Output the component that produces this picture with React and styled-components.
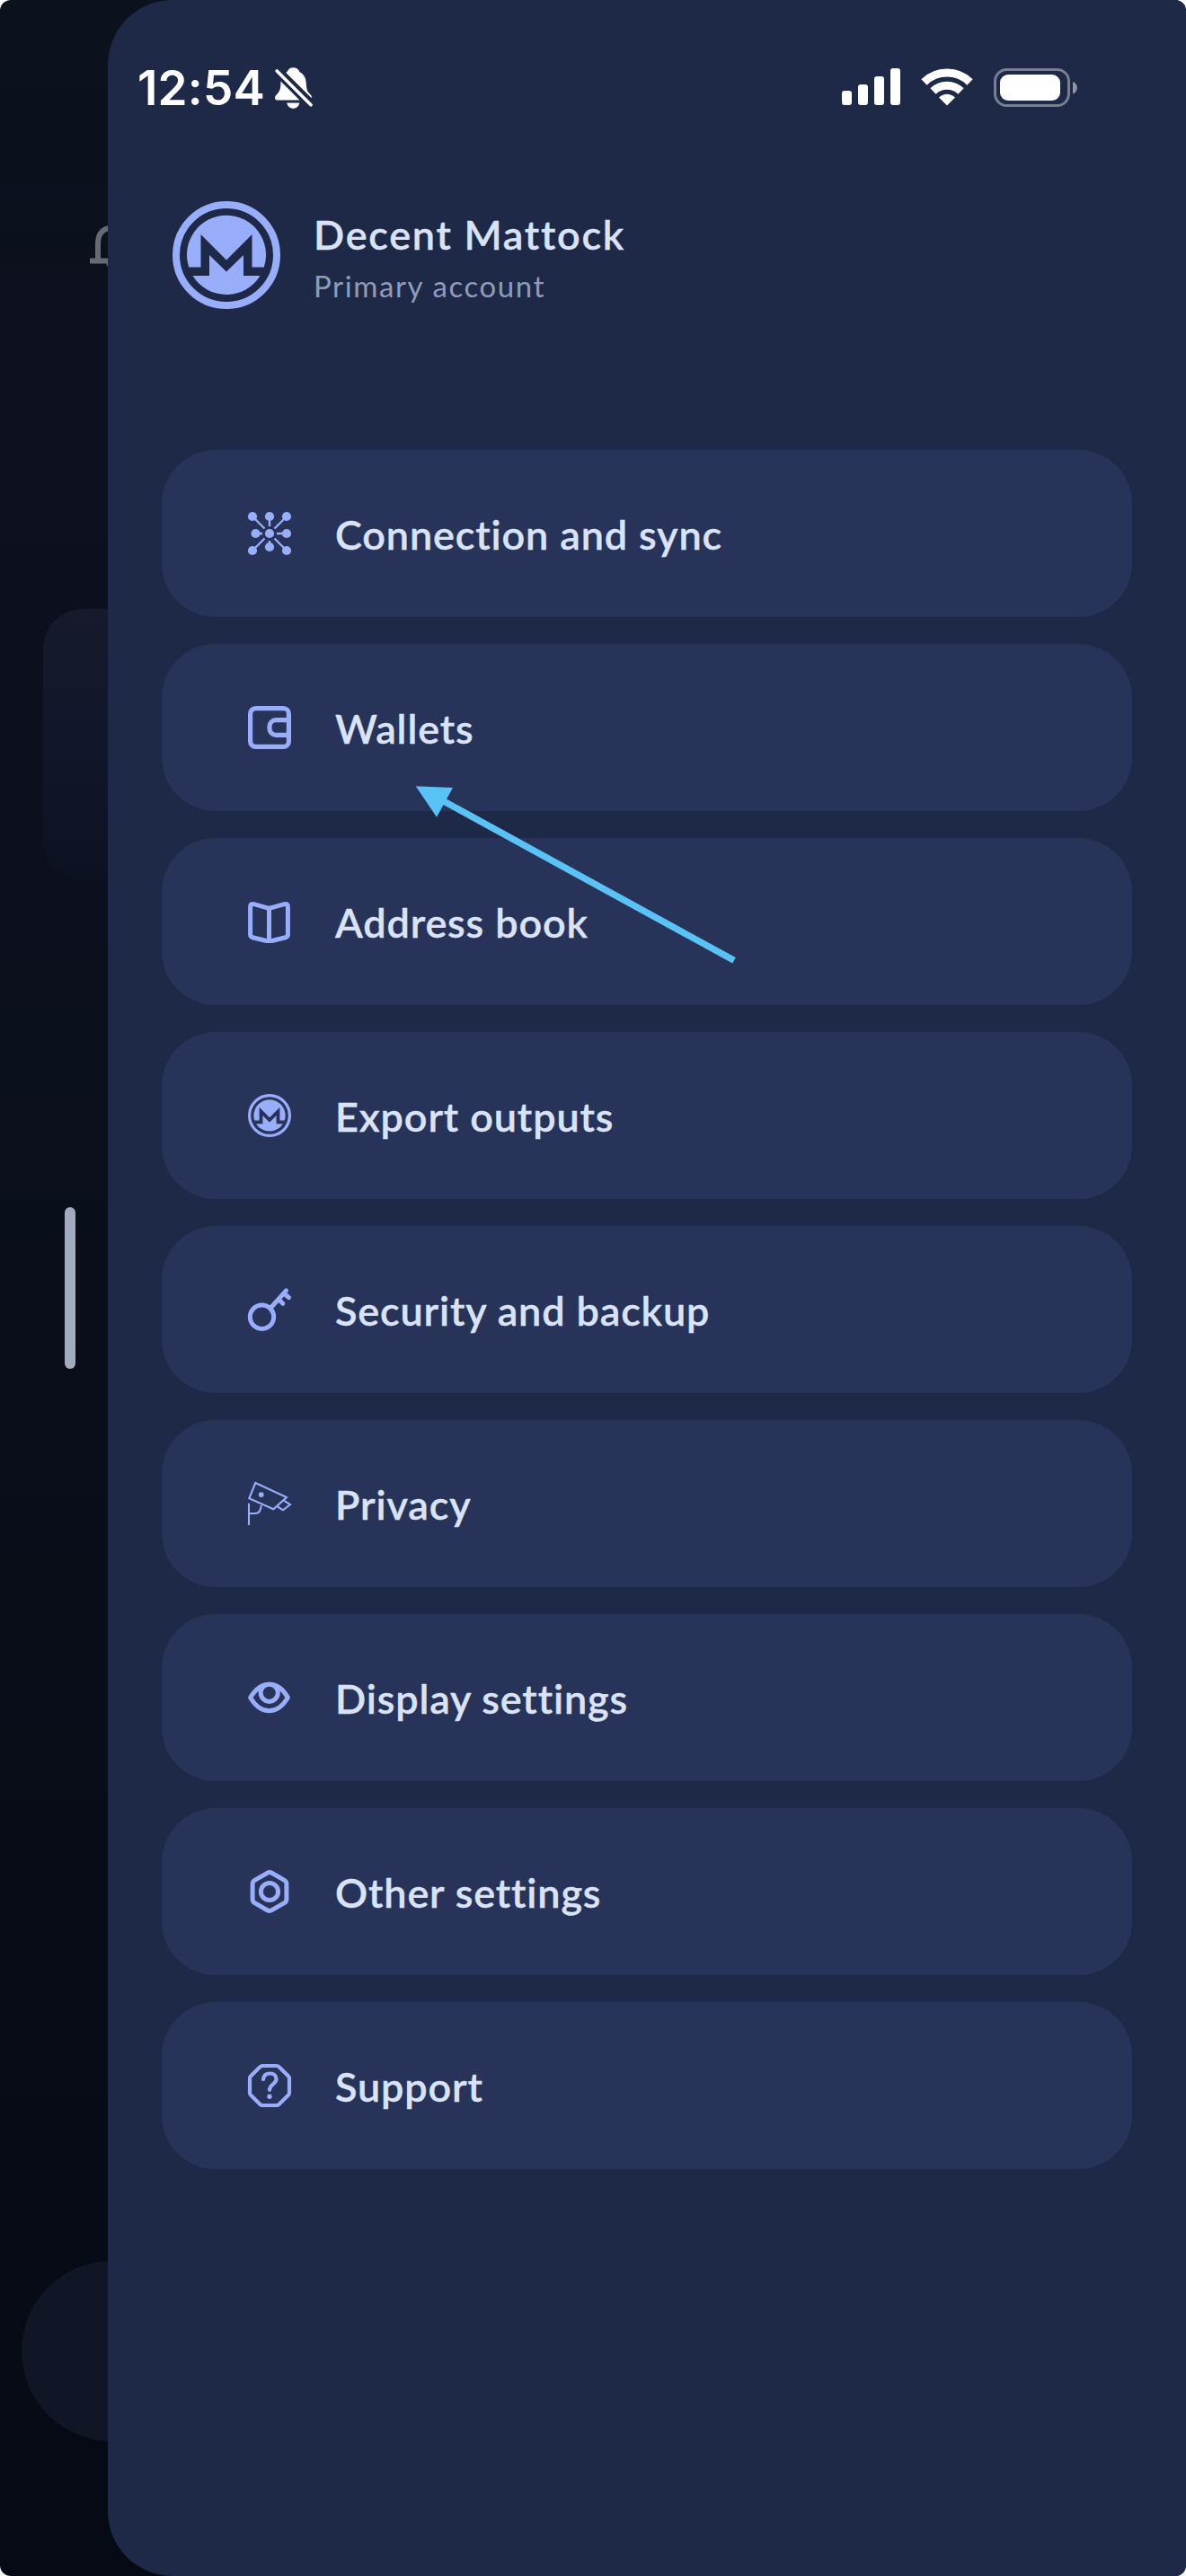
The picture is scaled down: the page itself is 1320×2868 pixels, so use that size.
import React from 'react';
import styled, { createGlobalStyle } from 'styled-components';

const GlobalStyle = createGlobalStyle`
  * { box-sizing: border-box; }
  html, body { margin: 0; background: #fff; }
`;

const accent = '#98aefa';

const Screen = styled.div`
  position: relative;
  display: flex;
  width: 1320px;
  height: 2868px;
  border-radius: 12px;
  overflow: hidden;
  background: linear-gradient(180deg, #0b121e 0px, #0a111d 190px, #0d101e 320px, #0c101e 900px, #090e1a 1500px, #060b15 2500px, #050a14 2868px);
  font-family: Lato, 'Open Sans', sans-serif;
`;

const Behind = styled.div`
  position: relative;
  width: 120px;
  flex: none;
`;

const BellPeek = styled.svg`
  position: absolute;
  left: 96px;
  top: 246px;
`;

const BalanceCard = styled.div`
  position: absolute;
  left: 48px;
  top: 678px;
  width: 600px;
  height: 303px;
  border-radius: 45px;
  background: linear-gradient(180deg, #161a2b 0%, #10172a 50%, #0c1221 100%);
`;

const ScrollHandle = styled.div`
  position: absolute;
  left: 72px;
  top: 1344px;
  width: 12px;
  height: 180px;
  border-radius: 6px;
  background: #a1acbf;
`;

const TabPill = styled.div`
  position: absolute;
  left: 24px;
  top: 2517px;
  width: 600px;
  height: 201px;
  border-radius: 101px;
  background: #111627;
`;

const Drawer = styled.main`
  position: relative;
  flex: 1;
  display: flex;
  flex-direction: column;
  border-radius: 72px 0 0 72px;
  background: #1e2948;
`;

const StatusBar = styled.header`
  display: flex;
  align-items: center;
  height: 120px;
  padding: 74px 120px 0 33px;
`;

const Clock = styled.div`
  width: 153px;
  padding-top: 2px;
  font: 600 53px/48px Inter, sans-serif;
  letter-spacing: 0.2px;
  color: #fff;
  white-space: nowrap;
`;

const StatusIcons = styled.div`
  display: flex;
  align-items: center;
  gap: 23px;
  margin-left: auto;
`;

const Profile = styled.section`
  display: flex;
  align-items: center;
  gap: 37px;
  height: 120px;
  margin: 104px 60px 0 72px;
`;

const Name = styled.h1`
  margin: 4px 0 0;
  font-size: 45px;
  line-height: 54px;
  font-weight: 600;
  letter-spacing: 1.72px;
  color: #dae3f6;
  -webkit-text-stroke: 0.35px #dae3f6;
`;

const Account = styled.p`
  margin: 9px 0 0;
  font-size: 33px;
  line-height: 42px;
  letter-spacing: 1.6px;
  color: #8f9cb8;
`;

const Menu = styled.nav`
  display: flex;
  flex-direction: column;
  gap: 30px;
  margin: 157px 60px 0;
`;

const MenuItem = styled.a`
  display: flex;
  align-items: center;
  gap: 49px;
  height: 186px;
  padding-left: 96px;
  border-radius: 60px;
  background: #273358;
`;

const MenuLabel = styled.span`
  padding-top: 2px;
  font-size: 45px;
  line-height: 54px;
  font-weight: 600;
  letter-spacing: 0.85px;
  color: #dae3f6;
  -webkit-text-stroke: 0.35px #dae3f6;
`;

const Glyph = styled.svg`
  flex: none;
  width: 48px;
  height: 48px;
  overflow: visible;
  fill: none;
  stroke: ${accent};
  stroke-width: ${(p) => p.$weight || 5};
  stroke-linecap: round;
  stroke-linejoin: round;
`;

const Arrow = styled.svg`
  position: absolute;
  left: 450px;
  top: 860px;
  pointer-events: none;
`;

const Coin = ({ size }) => (
  <svg width={size} height={size} viewBox="0 0 120 120">
    <circle cx="60" cy="60" r="56" fill="none" stroke={accent} strokeWidth="8" />
    <path fill={accent} d="M18.2 73.5A44 44 0 1 1 101.8 73.5H88.5V37L60 65.5L31.5 37V73.5Z" />
    <path fill={accent} d="M22.5 83H41V60L60 78.5L79 60V83H97.5A44 44 0 0 1 22.5 83Z" />
  </svg>
);

const dots = [[5, 5], [24, 5], [43, 5], [8.5, 24], [24, 24], [43, 24], [5, 43], [24, 39], [43, 43]];

const Network = () => (
  <Glyph viewBox="0 0 48 48" $weight={2.4}>
    <path strokeLinecap="butt" d="M5 5l13.5 13.5M43 5L29.5 18.5M5 43l13.5-13.5M43 43L29.5 29.5M24 5v11M24 39v-7M8.5 24H16M43 24H32" />
    {dots.map(([x, y]) => <circle key={`${x}-${y}`} cx={x} cy={y} r="5.1" fill={accent} stroke="none" />)}
  </Glyph>
);

const Wallet = () => (
  <Glyph viewBox="0 0 48 48" $weight={5.2}>
    <rect x="2.6" y="2.6" width="42.8" height="42.8" rx="6" />
    <path strokeLinecap="butt" d="M45 15.7H31a7 7 0 0 0-7 7v2.6a7 7 0 0 0 7 7h14" />
  </Glyph>
);

const Book = () => (
  <Glyph viewBox="0 0 48 48" $weight={5}>
    <path d="M23.5 9.3L6.6 4.7Q2.6 3.8 2.6 7.4V38.5q0 2.5 2.6 3.3L19.5 45.3q4 .6 8 0l14.3-3.5q2.6-.8 2.6-3.3V7.4q0-3.6-4-2.7ZM23.5 9.3V45" />
  </Glyph>
);

const Key = () => (
  <Glyph viewBox="0 0 48 48" $weight={5}>
    <circle cx="15.5" cy="32.2" r="13.2" />
    <path d="M25 22.5L42.5 2.8M34 12.5l4.8 4.8M40 6l5.5 4.7" />
  </Glyph>
);

const Camera = () => (
  <Glyph viewBox="0 0 48 48" $weight={2.1}>
    <path strokeLinejoin="miter" strokeLinecap="butt" d="M8.3 1L43 17L28.3 30.3L1.3 18.3ZM39.5 20.3L47 25L39 31.3L32.5 27M1 23.7V48M1 35h6.5q7 0 7.2-9" />
    <circle cx="14.7" cy="14.1" r="2.9" fill={accent} stroke="none" />
  </Glyph>
);

const Eye = () => (
  <Glyph viewBox="0 0 48 48" $weight={5}>
    <path d="M2.6 24C8 15 15 9.2 23.5 9.2S39.5 15 44.4 24C39 33 32 38.8 23.5 38.8S8 33 2.6 24Z" />
    <circle cx="23.7" cy="18.8" r="9.6" />
  </Glyph>
);

const Nut = () => (
  <Glyph viewBox="0 0 48 48" $weight={5}>
    <path d="M21.5 3.3q2.5-1.4 5 0l14 8q2.4 1.4 2.4 4.2v17q0 2.8-2.4 4.2l-14 8q-2.5 1.4-5 0l-14-8q-2.4-1.4-2.4-4.2v-17q0-2.8 2.4-4.2Z" />
    <circle cx="24" cy="24" r="9.6" />
  </Glyph>
);

const Help = () => (
  <Glyph viewBox="0 0 48 48" $weight={4.2}>
    <path d="M16 2h16q1.4 0 2.4 1L45 13.6q1 1 1 2.4v16q0 1.4-1 2.4L34.4 45q-1 1-2.4 1H16q-1.4 0-2.4-1L3 34.4q-1-1-1-2.4V16q0-1.4 1-2.4L13.6 3q1-1 2.4-1Z" />
    <path d="M17 17q.8-6.5 7.5-6.5c4.5 0 7 2.5 7 6.3 0 5.7-7.5 5.5-7.5 12" />
    <circle cx="24" cy="36.2" r="2.7" fill={accent} stroke="none" />
  </Glyph>
);

const items = [
  ['Connection and sync', <Network />],
  ['Wallets', <Wallet />],
  ['Address book', <Book />],
  ['Export outputs', <Coin size={48} />],
  ['Security and backup', <Key />],
  ['Privacy', <Camera />],
  ['Display settings', <Eye />],
  ['Other settings', <Nut />],
  ['Support', <Help />],
];

const Bell = styled.svg`
  margin-top: 2px;
`;

const BellOff = () => (
  <Bell width="43" height="46" viewBox="0 0 43 46" fill="#fff">
    <path d="M12.3 6C14.5 5.5 14 .3 20.3 .3S26.5 4.5 28 5.5C33 8 34.5 13 34.7 17C35 22 35.5 25 36.5 26.8C38 29.5 41.5 31 40.8 34.2Z" />
    <path d="M6.5 15.5L27.5 36.5H2.5C-.5 36.5-.5 33 1 31.2C5 27.5 6.5 25 6.5 15.5Z" />
    <path d="M13.3 39.5h14c-1.2 8.3-12.8 8.3-14 0Z" />
    <path d="M2.2 4L40 41.8" stroke="#fff" strokeWidth="3.6" strokeLinecap="round" />
  </Bell>
);

const Signal = () => (
  <svg width="65" height="42" viewBox="0 0 65 42" fill="#fff">
    <rect y="25" width="11" height="16" rx="3" />
    <rect x="18" y="18" width="11" height="23" rx="3" />
    <rect x="36" y="9" width="11" height="32" rx="3" />
    <rect x="54" width="11" height="41" rx="3" />
  </svg>
);

const Wifi = () => (
  <svg width="58" height="42" viewBox="0 0 58 42" fill="none" stroke="#fff" strokeWidth="9">
    <path d="M3.5 15.5a36.5 36.5 0 0 1 51 0" />
    <path d="M13.5 25.5a22.3 22.3 0 0 1 31 0" />
    <path d="M20 32.5q9-7.5 18 0L29 41.5Z" fill="#fff" stroke="none" />
  </svg>
);

const Battery = () => (
  <svg width="94" height="43" viewBox="0 0 94 43">
    <rect x="1.5" y="1.5" width="82" height="40" rx="13" fill="none" stroke="#787f93" strokeWidth="3" />
    <rect x="7" y="7" width="67" height="29" rx="9" fill="#fff" />
    <path d="M88 15c6.5 2 6.5 11.5 0 13.5Z" fill="#8f95a5" />
  </svg>
);

export default function App() {
  return (
    <Screen>
      <GlobalStyle />
      <Behind>
        <BellPeek width="60" height="56" viewBox="0 0 60 56" fill="none" stroke="#666a73" strokeWidth="6">
          <path d="M4 44.5H56M13 44V25C13 13 20 7.5 30 7.5S47 13 47 25V44M25 45c0 8 10 8 10 0" />
        </BellPeek>
        <BalanceCard />
        <ScrollHandle />
        <TabPill />
      </Behind>
      <Drawer>
        <StatusBar>
          <Clock>12:54</Clock>
          <BellOff />
          <StatusIcons>
            <Signal />
            <Wifi />
            <Battery />
          </StatusIcons>
        </StatusBar>
        <Profile>
          <Coin size={120} />
          <div>
            <Name>Decent Mattock</Name>
            <Account>Primary account</Account>
          </div>
        </Profile>
        <Menu>
          {items.map(([label, icon]) => (
            <MenuItem key={label}>
              {icon}
              <MenuLabel>{label}</MenuLabel>
            </MenuItem>
          ))}
        </Menu>
      </Drawer>
      <Arrow width="400" height="230" viewBox="0 0 400 230" fill="#5ac3f6">
        <path d="M12.7 15.3L54 17L36 49.7Z" />
        <path d="M42 31L367 209.3" stroke="#5ac3f6" strokeWidth="7.4" />
      </Arrow>
    </Screen>
  );
}
